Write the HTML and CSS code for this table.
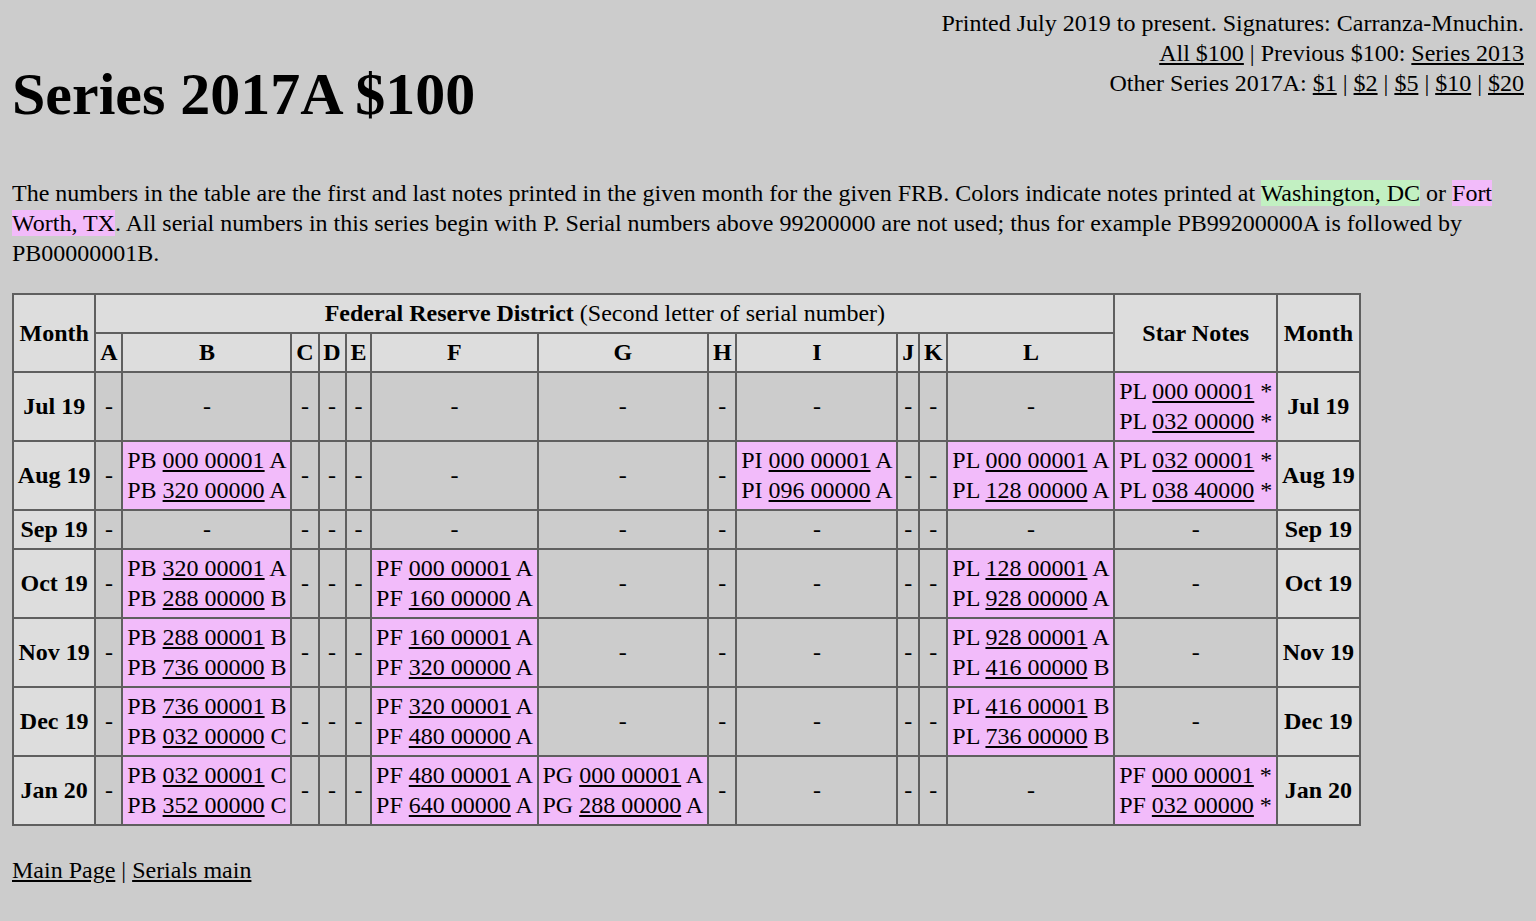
FILE: index.html
```html
<!DOCTYPE html>
<html>
<head>
<meta charset="utf-8">
<title>Series 2017A $100</title>
<link rel="stylesheet" href="styles.css">
</head>
<body>
<div class="top">
Printed July 2019 to present. Signatures: Carranza-Mnuchin.<br>
<a href="#">All $100</a> | Previous $100: <a href="#">Series 2013</a><br>
Other Series 2017A: <a href="#">$1</a> | <a href="#">$2</a> | <a href="#">$5</a> | <a href="#">$10</a> | <a href="#">$20</a>
</div>
<h1 class="title">Series 2017A $100</h1>
<p class="intro">The numbers in the table are the first and last notes printed in the given month for the given FRB. Colors indicate notes printed at <span class="dc">Washington, DC</span> or <span class="fw">Fort Worth, TX</span>. All serial numbers in this series begin with P. Serial numbers above 99200000 are not used; thus for example PB99200000A is followed by PB00000001B.</p>
<table class="serials">
<tr>
<th rowspan="2">Month</th>
<th colspan="12"><b>Federal Reserve District</b> <span class="norm">(Second letter of serial number)</span></th>
<th rowspan="2">Star Notes</th>
<th rowspan="2">Month</th>
</tr>
<tr>
<th>A</th><th>B</th><th>C</th><th>D</th><th>E</th><th>F</th><th>G</th><th>H</th><th>I</th><th>J</th><th>K</th><th>L</th>
</tr>
<tr>
<th>Jul 19</th>
<td>-</td><td>-</td><td>-</td><td>-</td><td>-</td><td>-</td><td>-</td><td>-</td><td>-</td><td>-</td><td>-</td><td>-</td>
<td class="fw">PL <a href="#">000 00001</a> *<br>PL <a href="#">032 00000</a> *</td>
<th>Jul 19</th>
</tr>
<tr>
<th>Aug 19</th>
<td>-</td>
<td class="fw">PB <a href="#">000 00001</a> A<br>PB <a href="#">320 00000</a> A</td>
<td>-</td><td>-</td><td>-</td><td>-</td><td>-</td><td>-</td>
<td class="fw">PI <a href="#">000 00001</a> A<br>PI <a href="#">096 00000</a> A</td>
<td>-</td><td>-</td>
<td class="fw">PL <a href="#">000 00001</a> A<br>PL <a href="#">128 00000</a> A</td>
<td class="fw">PL <a href="#">032 00001</a> *<br>PL <a href="#">038 40000</a> *</td>
<th>Aug 19</th>
</tr>
<tr>
<th>Sep 19</th>
<td>-</td><td>-</td><td>-</td><td>-</td><td>-</td><td>-</td><td>-</td><td>-</td><td>-</td><td>-</td><td>-</td><td>-</td>
<td>-</td>
<th>Sep 19</th>
</tr>
<tr>
<th>Oct 19</th>
<td>-</td>
<td class="fw">PB <a href="#">320 00001</a> A<br>PB <a href="#">288 00000</a> B</td>
<td>-</td><td>-</td><td>-</td>
<td class="fw">PF <a href="#">000 00001</a> A<br>PF <a href="#">160 00000</a> A</td>
<td>-</td><td>-</td><td>-</td><td>-</td><td>-</td>
<td class="fw">PL <a href="#">128 00001</a> A<br>PL <a href="#">928 00000</a> A</td>
<td>-</td>
<th>Oct 19</th>
</tr>
<tr>
<th>Nov 19</th>
<td>-</td>
<td class="fw">PB <a href="#">288 00001</a> B<br>PB <a href="#">736 00000</a> B</td>
<td>-</td><td>-</td><td>-</td>
<td class="fw">PF <a href="#">160 00001</a> A<br>PF <a href="#">320 00000</a> A</td>
<td>-</td><td>-</td><td>-</td><td>-</td><td>-</td>
<td class="fw">PL <a href="#">928 00001</a> A<br>PL <a href="#">416 00000</a> B</td>
<td>-</td>
<th>Nov 19</th>
</tr>
<tr>
<th>Dec 19</th>
<td>-</td>
<td class="fw">PB <a href="#">736 00001</a> B<br>PB <a href="#">032 00000</a> C</td>
<td>-</td><td>-</td><td>-</td>
<td class="fw">PF <a href="#">320 00001</a> A<br>PF <a href="#">480 00000</a> A</td>
<td>-</td><td>-</td><td>-</td><td>-</td><td>-</td>
<td class="fw">PL <a href="#">416 00001</a> B<br>PL <a href="#">736 00000</a> B</td>
<td>-</td>
<th>Dec 19</th>
</tr>
<tr>
<th>Jan 20</th>
<td>-</td>
<td class="fw">PB <a href="#">032 00001</a> C<br>PB <a href="#">352 00000</a> C</td>
<td>-</td><td>-</td><td>-</td>
<td class="fw">PF <a href="#">480 00001</a> A<br>PF <a href="#">640 00000</a> A</td>
<td class="fw">PG <a href="#">000 00001</a> A<br>PG <a href="#">288 00000</a> A</td>
<td>-</td><td>-</td><td>-</td><td>-</td>
<td>-</td>
<td class="fw">PF <a href="#">000 00001</a> *<br>PF <a href="#">032 00000</a> *</td>
<th>Jan 20</th>
</tr>
</table>
<p class="footer"><a href="#">Main Page</a> | <a href="#">Serials main</a></p>
</body>
</html>
```

FILE: styles.css
```css
html {
  background: #cccccc;
}
body {
  margin: 8px 12px;
  background: #cccccc;
  color: #000;
  font-family: "Liberation Serif", "Times New Roman", serif;
  font-size: 24px;
  line-height: 30px;
}
a {
  color: #000;
  text-decoration: underline;
}
.top {
  float: right;
  text-align: right;
}
.title {
  font-size: 60px;
  line-height: 69px;
  font-weight: bold;
  margin: 52px 0 0;
}
.intro {
  margin: 49px 0 0;
}
.dc {
  background: #c2f0c2;
}
.fw {
  background: #f2bbfa;
}
.serials {
  margin-top: 25px;
  border: 1px solid #5f5f5f;
  border-spacing: 0;
  border-collapse: separate;
}
.serials th,
.serials td {
  border: 1px solid #5f5f5f;
  padding: 3px 3.85px 4px;
  text-align: center;
  vertical-align: middle;
  white-space: nowrap;
}
.serials th {
  background: #dddddd;
  font-weight: bold;
}
.serials td.fw {
  background: #f2bbfa;
  text-align: left;
}
.norm {
  font-weight: normal;
}
.footer {
  margin: 29px 0 0;
}
```
